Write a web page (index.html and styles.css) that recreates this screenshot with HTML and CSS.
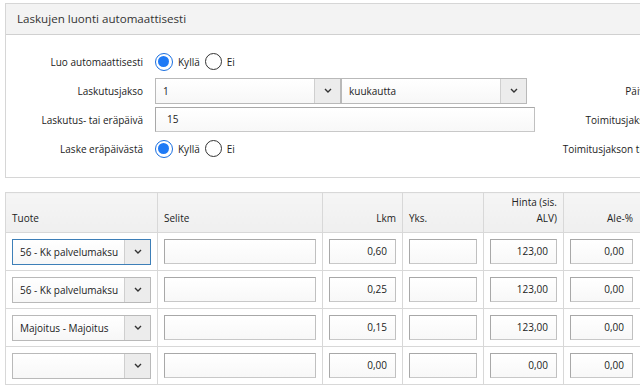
FILE: index.html
```html
<!DOCTYPE html>
<html lang="fi">
<head>
<meta charset="utf-8">
<title>Laskujen luonti</title>
<link rel="stylesheet" href="styles.css">
</head>
<body>
<div class="page">
  <section class="panel">
    <div class="panel-head">Laskujen luonti automaattisesti</div>
    <div class="panel-body">
      <div class="frow">
        <div class="flabel">Luo automaattisesti</div>
        <div class="fctrl">
          <span class="radio on"></span><span class="rtext">Kyllä</span>
          <span class="radio"></span><span class="rtext">Ei</span>
        </div>
        <div class="rlabel"></div>
      </div>
      <div class="frow">
        <div class="flabel">Laskutusjakso</div>
        <div class="fctrl">
          <div class="select w186"><span class="sval">1</span><span class="sbtn"><svg width="8" height="5" viewBox="0 0 8 5"><path d="M1 1l3 3 3-3" fill="none" stroke="#333" stroke-width="1.4"/></svg></span></div>
          <div class="select w186"><span class="sval">kuukautta</span><span class="sbtn"><svg width="8" height="5" viewBox="0 0 8 5"><path d="M1 1l3 3 3-3" fill="none" stroke="#333" stroke-width="1.4"/></svg></span></div>
        </div>
        <div class="rlabel">Päivä</div>
      </div>
      <div class="frow">
        <div class="flabel">Laskutus- tai eräpäivä</div>
        <div class="fctrl">
          <div class="input wide">15</div>
        </div>
        <div class="rlabel">Toimitusjakso</div>
      </div>
      <div class="frow">
        <div class="flabel">Laske eräpäivästä</div>
        <div class="fctrl">
          <span class="radio on"></span><span class="rtext">Kyllä</span>
          <span class="radio"></span><span class="rtext">Ei</span>
        </div>
        <div class="rlabel">Toimitusjakson tila</div>
      </div>
    </div>
  </section>

  <table class="grid">
    <colgroup>
      <col class="c-tuote"><col class="c-selite"><col class="c-num"><col class="c-yks"><col class="c-num"><col class="c-last">
    </colgroup>
    <thead>
      <tr>
        <th>Tuote</th>
        <th>Selite</th>
        <th class="r">Lkm</th>
        <th>Yks.</th>
        <th class="r">Hinta (sis.<br>ALV)</th>
        <th class="r last">Ale-%</th>
      </tr>
    </thead>
    <tbody>
      <tr>
        <td><div class="select focus"><span class="sval">56 - Kk palvelumaksu</span><span class="sbtn"><svg width="8" height="5" viewBox="0 0 8 5"><path d="M1 1l3 3 3-3" fill="none" stroke="#333" stroke-width="1.4"/></svg></span></div></td>
        <td><div class="input"></div></td>
        <td><div class="input num">0,60</div></td>
        <td><div class="input"></div></td>
        <td><div class="input num">123,00</div></td>
        <td class="last"><div class="input num">0,00</div></td>
      </tr>
      <tr>
        <td><div class="select"><span class="sval">56 - Kk palvelumaksu</span><span class="sbtn"><svg width="8" height="5" viewBox="0 0 8 5"><path d="M1 1l3 3 3-3" fill="none" stroke="#333" stroke-width="1.4"/></svg></span></div></td>
        <td><div class="input"></div></td>
        <td><div class="input num">0,25</div></td>
        <td><div class="input"></div></td>
        <td><div class="input num">123,00</div></td>
        <td class="last"><div class="input num">0,00</div></td>
      </tr>
      <tr>
        <td><div class="select"><span class="sval">Majoitus - Majoitus</span><span class="sbtn"><svg width="8" height="5" viewBox="0 0 8 5"><path d="M1 1l3 3 3-3" fill="none" stroke="#333" stroke-width="1.4"/></svg></span></div></td>
        <td><div class="input"></div></td>
        <td><div class="input num">0,15</div></td>
        <td><div class="input"></div></td>
        <td><div class="input num">123,00</div></td>
        <td class="last"><div class="input num">0,00</div></td>
      </tr>
      <tr>
        <td><div class="select"><span class="sval"></span><span class="sbtn"><svg width="8" height="5" viewBox="0 0 8 5"><path d="M1 1l3 3 3-3" fill="none" stroke="#333" stroke-width="1.4"/></svg></span></div></td>
        <td><div class="input"></div></td>
        <td><div class="input num">0,00</div></td>
        <td><div class="input"></div></td>
        <td><div class="input num">0,00</div></td>
        <td class="last"><div class="input num">0,00</div></td>
      </tr>
    </tbody>
  </table>
</div>
</body>
</html>
```
FILE: styles.css
```css
html, body {
  margin: 0;
  padding: 0;
  background: #fff;
  overflow: hidden;
}
body {
  font-family: "Open Sans", "Noto Sans", sans-serif;
  font-size: 10px;
  color: #222;
}
.page {
  width: 720px;
  padding: 3px 0 0 5px;
}
.panel {
  border: 1px solid #d6d6d6;
  width: 700px;
}
.panel-head {
  background: #f3f3f3;
  border-bottom: 1px solid #d0d0d0;
  height: 30px;
  line-height: 30px;
  padding-left: 11px;
  font-size: 11.6px;
  color: #333;
}
.panel-body {
  padding: 12px 0 14px 0;
}
.frow {
  display: flex;
  align-items: center;
  height: 29px;
}
.flabel {
  width: 137px;
  text-align: right;
  padding-right: 12px;
  flex: none;
}
.fctrl {
  width: 380px;
  flex: none;
  display: flex;
  align-items: center;
}
.rlabel {
  width: 115px;
  text-align: right;
  white-space: nowrap;
  flex: none;
}
.radio {
  width: 17px;
  height: 17px;
  border: 1px solid #333;
  border-radius: 50%;
  box-sizing: border-box;
  display: inline-block;
  background: #fff;
  margin-left: 1px;
  position: relative;
}
.radio.on {
  border: 1.5px solid #1a6fe0;
  width: 18px;
  height: 18px;
  margin-left: 0;
}
.radio.on::after {
  content: "";
  position: absolute;
  left: 2px;
  top: 2px;
  width: 11px;
  height: 11px;
  border-radius: 50%;
  background: #1f7af5;
}
.rtext {
  margin: 0 4px 0 5px;
}
.select {
  display: flex;
  height: 26px;
  border: 1px solid #b9b9b9;
  box-sizing: border-box;
  background: linear-gradient(#fff, #f7f7f7);
}
.select.w186 {
  width: 186px;
}
.select.focus {
  border-color: #3d7fb8;
}
.sval {
  flex: 1;
  padding-left: 7px;
  line-height: 24px;
  white-space: nowrap;
  overflow: hidden;
}
.sbtn {
  width: 25px;
  flex: none;
  border-left: 1px solid #cfcfcf;
  background: #ececec;
  display: flex;
  align-items: center;
  justify-content: center;
}
.input {
  height: 25px;
  box-sizing: border-box;
  border: 1px solid #a8a8a8;
  border-bottom-color: #c8c8c8;
  border-right-color: #c0c0c0;
  background: linear-gradient(#fff, #f8f8f8);
  line-height: 23px;
  padding: 0 8px;
}
.input.wide {
  width: 380px;
  padding-left: 11px;
}
.input.num {
  text-align: right;
}
.grid {
  margin-top: 14px;
  border-collapse: collapse;
  table-layout: fixed;
  width: 678px;
}
.c-tuote { width: 152px; }
.c-selite { width: 165px; }
.c-num { width: 80px; }
.c-yks { width: 81px; }
.c-last { width: 120px; }
.grid th, .grid td {
  border: 1px solid #d8d8d8;
  padding: 0 6px 0 6px;
}
.grid th.last, .grid td.last {
  padding-right: 50px;
}
.grid th {
  background: linear-gradient(#f5f5f5, #efefef);
  height: 40px;
  vertical-align: bottom;
  padding-bottom: 6px;
  text-align: left;
  font-weight: normal;
  line-height: 16px;
  box-sizing: border-box;
}
.grid th.r {
  text-align: right;
}
.grid td {
  height: 38px;
  box-sizing: border-box;
}
```
